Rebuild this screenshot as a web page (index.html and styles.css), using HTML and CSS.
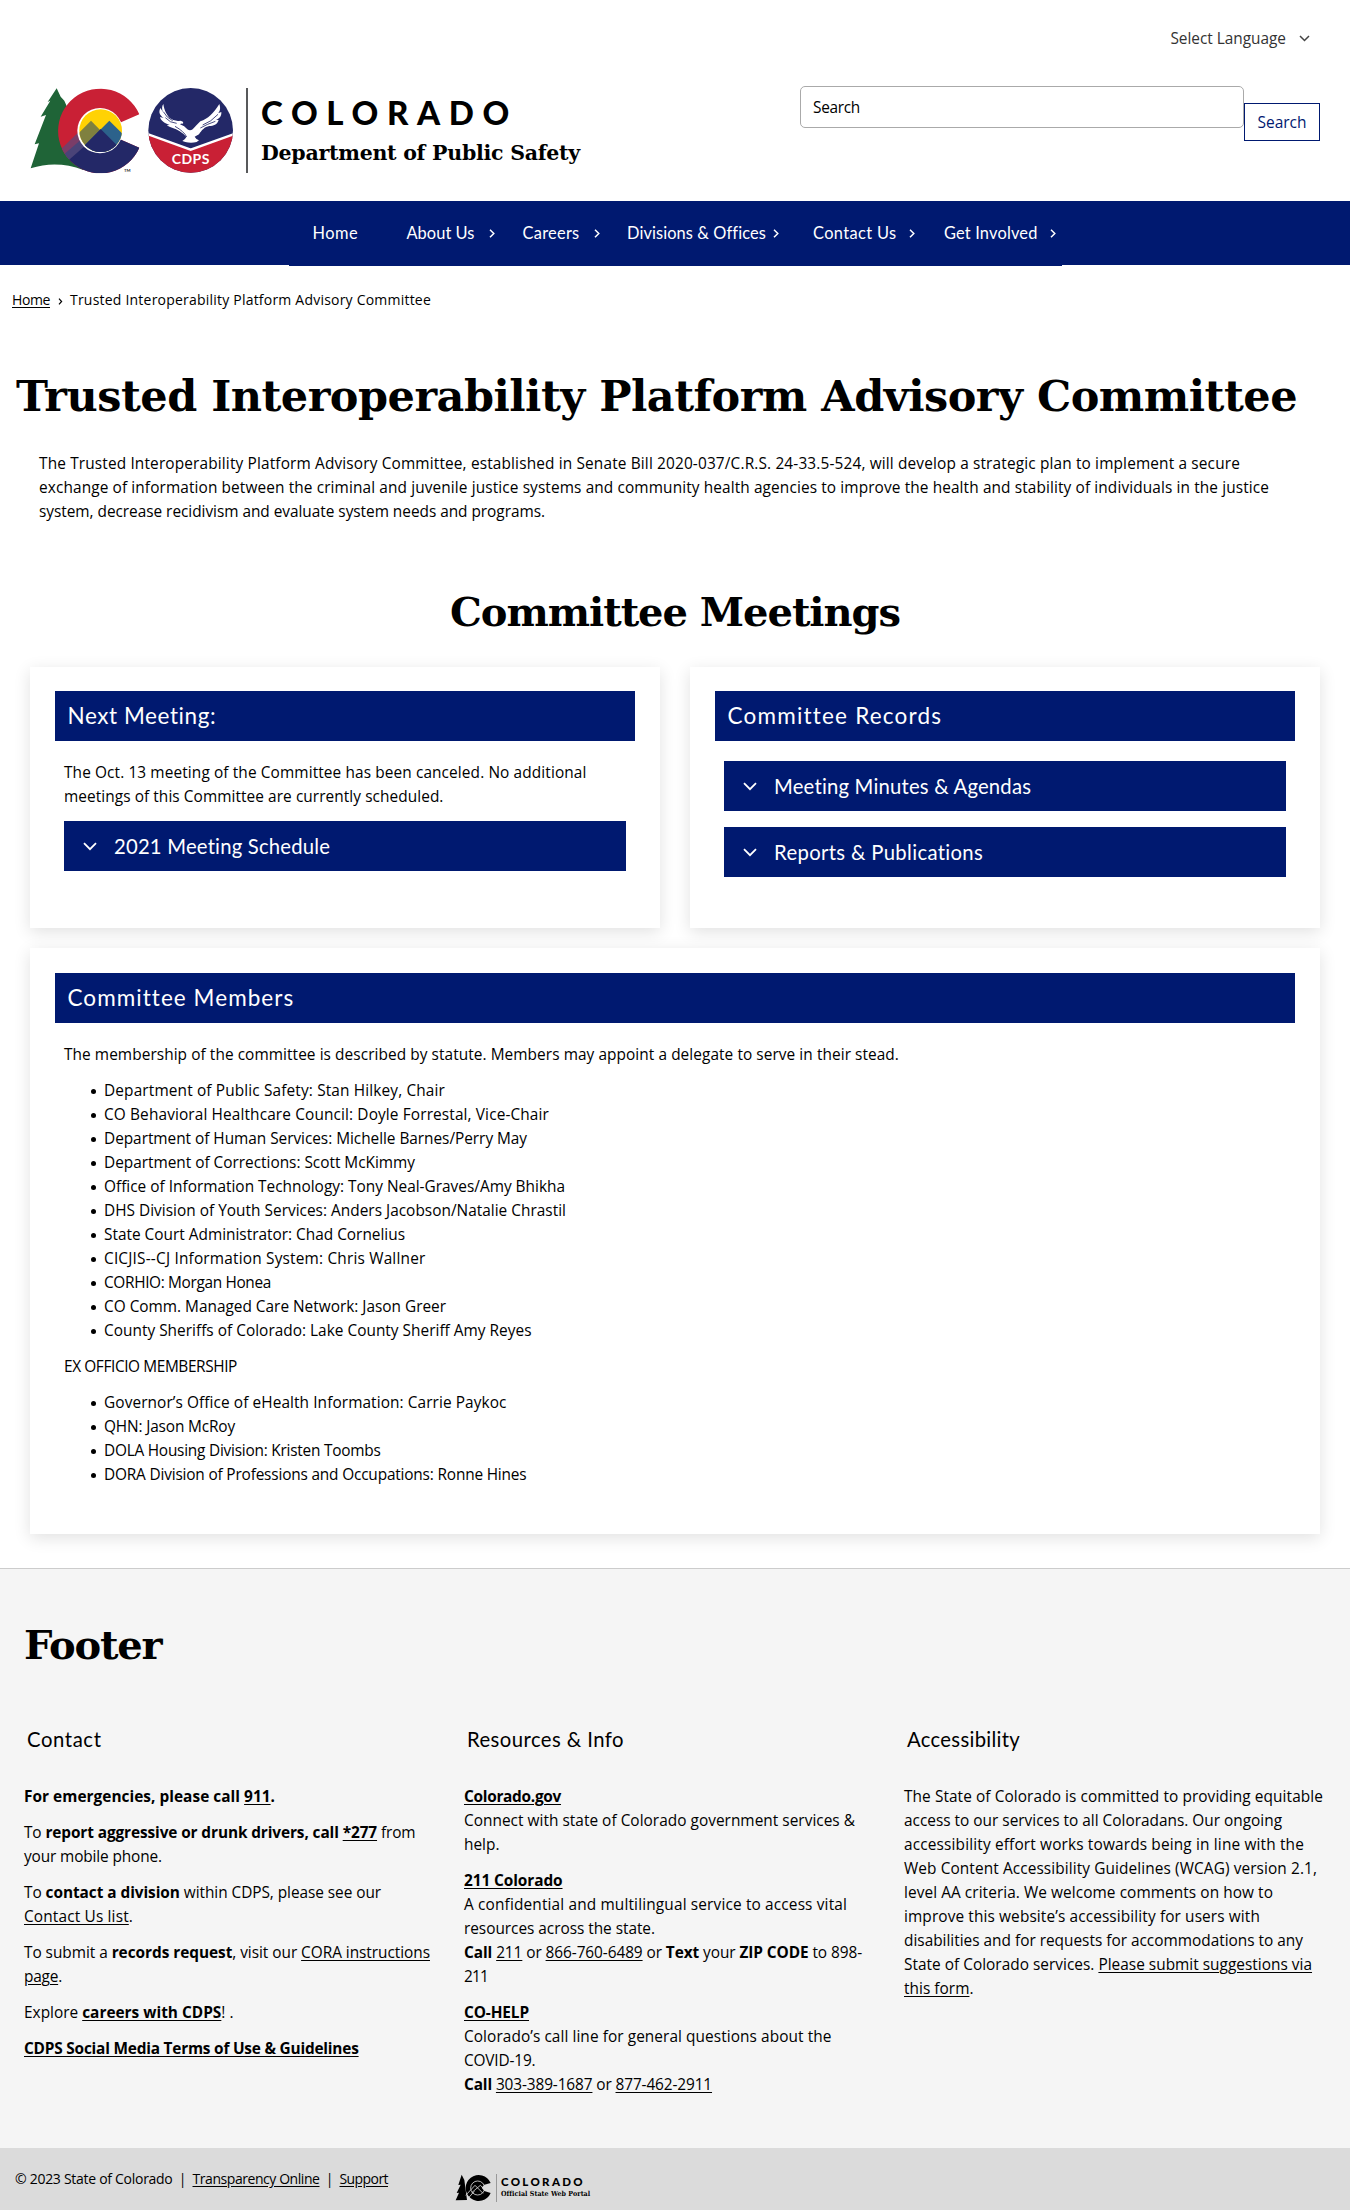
FILE: index.html
```html
<!DOCTYPE html>
<html lang="en">
<head>
<meta charset="utf-8">
<title>Trusted Interoperability Platform Advisory Committee</title>
<link rel="stylesheet" href="styles.css">
</head>
<body>
<header class="site-header">
  <div class="language"><span data-w="115.6">Select Language</span>
    <svg class="language-chevron" width="11" height="7" viewBox="0 0 11 7"><path d="M1 1l4.5 4.5L10 1"/></svg>
  </div>
  <div class="masthead">
    <a class="logo">
      <svg width="220" height="100" viewBox="0 0 660 300" role="img" aria-label="Colorado CDPS">
        <defs>
          <clipPath id="sun"><circle cx="242" cy="152" r="64"/></clipPath>
          <clipPath id="badge"><circle cx="512" cy="151" r="127"/></clipPath>
          <clipPath id="ring"><path d="M358 103A127 127 0 1 0 358 203L303 179L282 152L303 127Z"/></clipPath>
        </defs>
        <path fill="#1f6437" d="M110 25L122 50L133 62L140 78L151 108L190 270Q110 240 32 265L57 190L44 193L78 105L62 110L91 62L83 66Z"/>
        <g clip-path="url(#ring)">
          <rect x="110" y="20" width="260" height="260" fill="#c92035"/>
          <path fill="#232867" d="M120 250L190 190L300 170L370 170V290H120Z"/>
          <path fill="#7a3d68" d="M112 218L182 150L200 190L140 242Z"/>
          <path fill="#4a4478" d="M126 228L196 168L204 190L144 242Z"/>
        </g>
        <circle cx="240" cy="152" r="68" fill="#fff"/>
        <g clip-path="url(#sun)">
          <rect x="170" y="80" width="140" height="144" fill="#ffd204"/>
          <path fill="#7f803f" d="M150 185L213 122L290 200V230H150Z"/>
          <path fill="#2c628b" d="M180 210L268 122L320 174V230H180Z"/>
          <path fill="#232867" d="M168 222L242 147L320 225V240H168Z"/>
        </g>
        <text x="312" y="276" class="mark-tm">TM</text>
        <g clip-path="url(#badge)">
          <rect x="380" y="20" width="264" height="264" fill="#232867"/>
          <path fill="#c92035" stroke="#fff" stroke-width="7" d="M370 158L512 209L654 158V300H370Z"/>
        </g>
        <path fill="#fff" d="M430 72C433 92 440 104 449 114Q463 125 481 122Q492 124 489 131Q483 130 480 133Q494 137 502 148Q510 154 518 148Q528 137 541 124C565 116 579 101 598 72C603 86 599 95 594 100L604 96C605 110 597 116 588 120L596 120C592 134 580 138 568 138C554 140 545 151 537 163L524 170Q528 178 537 181L530 186Q513 191 496 186L487 183Q496 178 499 171Q490 160 478 153C466 145 450 143 440 136L449 135C434 130 423 123 420 111L431 114C419 105 415 98 421 84L429 96Q423 82 430 72Z"/>
        <path fill="none" stroke="#232867" stroke-width="2.5" d="M430 95Q440 114 458 122M436 113Q450 129 470 130M500 171Q492 154 465 139M548 135Q573 126 594 103M541 144Q560 133 586 124"/>
        <text x="455" y="252" class="badge-text" textLength="113">CDPS</text>
      </svg>
      <span class="logo-rule"></span>
      <span class="logo-text">
        <span class="logo-state"><span data-w="257">COLORADO</span></span>
        <span class="logo-dept"><span data-w="319">Department of Public Safety</span></span>
      </span>
    </a>
    <form class="search">
      <label class="search-field"><span data-w="47">Search</span></label>
      <button type="button" class="search-button"><span data-w="49">Search</span></button>
    </form>
  </div>
</header>

<nav class="site-nav">
  <ul class="menu">
    <li><span data-w="45.5">Home</span></li>
    <li><span data-w="68">About Us</span><svg class="caret" width="6" height="9" viewBox="0 0 6 9"><path d="M1 .7l3.8 3.8L1 8.3"/></svg></li>
    <li><span data-w="57">Careers</span><svg class="caret" width="6" height="9" viewBox="0 0 6 9"><path d="M1 .7l3.8 3.8L1 8.3"/></svg></li>
    <li><span data-w="138">Divisions &amp; Offices</span><svg class="caret" width="6" height="9" viewBox="0 0 6 9"><path d="M1 .7l3.8 3.8L1 8.3"/></svg></li>
    <li><span data-w="83.5">Contact Us</span><svg class="caret" width="6" height="9" viewBox="0 0 6 9"><path d="M1 .7l3.8 3.8L1 8.3"/></svg></li>
    <li><span data-w="93.5">Get Involved</span><svg class="caret" width="6" height="9" viewBox="0 0 6 9"><path d="M1 .7l3.8 3.8L1 8.3"/></svg></li>
  </ul>
</nav>

<div class="breadcrumb">
  <a data-w="38">Home</a>
  <svg width="5" height="7" viewBox="0 0 5 7"><path d="M1 .7l2.6 2.8L1 6.3"/></svg>
  <span data-w="361">Trusted Interoperability Platform Advisory Committee</span>
</div>

<main>
  <h1><span data-w="1281">Trusted Interoperability Platform Advisory Committee</span></h1>
  <p class="intro"><span data-w="1201">The Trusted Interoperability Platform Advisory Committee, established in Senate Bill 2020-037/C.R.S. 24-33.5-524, will develop a strategic plan to implement a secure</span><br><span data-w="1230">exchange of information between the criminal and juvenile justice systems and community health agencies to improve the health and stability of individuals in the justice</span><br><span data-w="506">system, decrease recidivism and evaluate system needs and programs.</span></p>
  <h2><span data-w="450">Committee Meetings</span></h2>

  <div class="cards">
    <section class="card">
      <h3><span data-w="149">Next Meeting:</span></h3>
      <div class="card-body">
        <p><span data-w="522.5">The Oct. 13 meeting of the Committee has been canceled. No additional</span><br><span data-w="379.5">meetings of this Committee are currently scheduled.</span></p>
        <div class="accordion"><svg width="14" height="9" viewBox="0 0 14 9"><path d="M1 1.2l6 6 6-6"/></svg><span data-w="216.5">2021 Meeting Schedule</span></div>
      </div>
    </section>
    <section class="card">
      <h3><span data-w="214">Committee Records</span></h3>
      <div class="card-body">
        <div class="accordion"><svg width="14" height="9" viewBox="0 0 14 9"><path d="M1 1.2l6 6 6-6"/></svg><span data-w="257.5">Meeting Minutes &amp; Agendas</span></div>
        <div class="accordion"><svg width="14" height="9" viewBox="0 0 14 9"><path d="M1 1.2l6 6 6-6"/></svg><span data-w="209.5">Reports &amp; Publications</span></div>
      </div>
    </section>
    <section class="card card-wide">
      <h3><span data-w="226">Committee Members</span></h3>
      <div class="card-body">
        <p><span data-w="835">The membership of the committee is described by statute. Members may appoint a delegate to serve in their stead.</span></p>
        <ul>
          <li><span data-w="341">Department of Public Safety: Stan Hilkey, Chair</span></li>
          <li><span data-w="445">CO Behavioral Healthcare Council: Doyle Forrestal, Vice-Chair</span></li>
          <li><span data-w="423">Department of Human Services: Michelle Barnes/Perry May</span></li>
          <li><span data-w="311">Department of Corrections: Scott McKimmy</span></li>
          <li><span data-w="461">Office of Information Technology: Tony Neal-Graves/Amy Bhikha</span></li>
          <li><span data-w="462">DHS Division of Youth Services: Anders Jacobson/Natalie Chrastil</span></li>
          <li><span data-w="301">State Court Administrator: Chad Cornelius</span></li>
          <li><span data-w="321.5">CICJIS--CJ Information System: Chris Wallner</span></li>
          <li><span data-w="167">CORHIO: Morgan Honea</span></li>
          <li><span data-w="342">CO Comm. Managed Care Network: Jason Greer</span></li>
          <li><span data-w="427.5">County Sheriffs of Colorado: Lake County Sheriff Amy Reyes</span></li>
        </ul>
        <p><span data-w="173">EX OFFICIO MEMBERSHIP</span></p>
        <ul>
          <li><span data-w="402.5">Governor’s Office of eHealth Information: Carrie Paykoc</span></li>
          <li><span data-w="131">QHN: Jason McRoy</span></li>
          <li><span data-w="276.5">DOLA Housing Division: Kristen Toombs</span></li>
          <li><span data-w="422.5">DORA Division of Professions and Occupations: Ronne Hines</span></li>
        </ul>
      </div>
    </section>
  </div>
</main>

<footer>
  <div class="footer-main">
    <h2><span data-w="137.5">Footer</span></h2>
    <div class="footer-columns">
      <section>
        <h4><span data-w="74.5">Contact</span></h4>
        <p><b data-w="251">For emergencies, please call <a>911</a>.</b></p>
        <p><span data-w="391.5">To <b>report aggressive or drunk drivers, call <a>*277</a></b> from</span><br><span data-w="138">your mobile phone.</span></p>
        <p><span data-w="357">To <b>contact a division</b> within CDPS, please see our</span><br><span data-w="109"><a>Contact Us list</a>.</span></p>
        <p><span data-w="406">To submit a <b>records request</b>, visit our <a>CORA instructions</a></span><br><span data-w="38"><a>page</a>.</span></p>
        <p><span data-w="209.5">Explore <b><a>careers with CDPS</a></b>! .</span></p>
        <p><b data-w="334.6"><a>CDPS Social Media Terms of Use &amp; Guidelines</a></b></p>
      </section>
      <section>
        <h4><span data-w="157">Resources &amp; Info</span></h4>
        <p><b data-w="97"><a>Colorado.gov</a></b><br><span data-w="391">Connect with state of Colorado government services &amp;</span><br><span data-w="35.5">help.</span></p>
        <p><b data-w="98.5"><a>211 Colorado</a></b><br><span data-w="383">A confidential and multilingual service to access vital</span><br><span data-w="191">resources across the state.</span><br><span data-w="398"><b>Call</b> <a>211</a> or <a>866-760-6489</a> or <b>Text</b> your <b>ZIP CODE</b> to 898-</span><br><span data-w="24">211</span></p>
        <p><b data-w="65"><a>CO-HELP</a></b><br><span data-w="367.5">Colorado’s call line for general questions about the</span><br><span data-w="71.5">COVID-19.</span><br><span data-w="248"><b>Call</b> <a>303-389-1687</a> or <a>877-462-2911</a></span></p>
      </section>
      <section>
        <h4><span data-w="113">Accessibility</span></h4>
        <p><span data-w="419">The State of Colorado is committed to providing equitable</span><br><span data-w="378">access to our services to all Coloradans. Our ongoing</span><br><span data-w="400">accessibility effort works towards being in line with the</span><br><span data-w="413">Web Content Accessibility Guidelines (WCAG) version 2.1,</span><br><span data-w="369">level AA criteria. We welcome comments on how to</span><br><span data-w="356">improve this website’s accessibility for users with</span><br><span data-w="399">disabilities and for requests for accommodations to any</span><br><span data-w="408">State of Colorado services. <a>Please submit suggestions via</a></span><br><span data-w="69.5"><a>this form</a>.</span></p>
      </section>
    </div>
  </div>
  <div class="footer-bar">
    <div class="legal"><span data-w="157.5">© 2023 State of Colorado</span><i>|</i><a data-w="127">Transparency Online</a><i>|</i><a data-w="48.5">Support</a></div>
    <div class="portal">
      <svg width="36" height="28" viewBox="0 0 108 84">
        <path d="M20 2L28 18L36 78L2 79L12 56L5 57L17 32L10 33Z"/>
        <path d="M107 27A39 39 0 1 0 107 57L88 51L80 41L88 32Z"/>
        <circle cx="68" cy="42" r="21" class="portal-line"/>
        <path class="portal-line" d="M32 64L60 34L84 58M50 56L76 34L89 46M40 72L58 52"/>
      </svg>
      <span class="portal-rule"></span>
      <span class="portal-text"><span class="portal-state"><span data-w="84">COLORADO</span></span><span class="portal-name"><span data-w="89">Official State Web Portal</span></span></span>
    </div>
  </div>
</footer>
<script src="tracking.js"></script>
</body>
</html>
```
FILE: styles.css
```css
*{box-sizing:border-box}
body,h1,h2,h3,h4,p,ul{margin:0;padding:0}
body{font:15.4px/24px "Open Sans","Noto Sans",sans-serif;color:#000;background:#fff;overflow-x:hidden}
[data-w]{white-space:nowrap}
svg{display:block;flex:none}
a{text-decoration:underline;text-underline-offset:2px}
ul{list-style:none}

.site-header{height:201px}
.language{display:flex;align-items:center;justify-content:flex-end;gap:13px;padding:27px 40px 0 0;height:50px;color:#333}
.language-chevron,.caret,.breadcrumb svg,.accordion svg{fill:none;stroke:#444;stroke-width:1.5}
.masthead{display:flex;justify-content:space-between;align-items:flex-start;padding:30px 30px 0 20px}
.logo{display:flex;text-decoration:none}
.logo-rule{width:2px;height:85px;margin:8px 13px 0 6px;background:#58595b}
.logo-text{padding-top:14px}
.logo-state{display:block;font:900 33px/36px Lato,sans-serif;margin-bottom:8px}
.logo-dept{display:block;font:700 20.5px/30px "DejaVu Serif",serif}
.mark-tm{font:500 13px Lato,sans-serif}
.badge-text{font:700 42px Lato,sans-serif;fill:#fff}
.search{display:flex;align-items:flex-start;width:520px;margin-top:6px}
.search-field{flex:1;height:42px;padding:9px 12px;border:1px solid #aaa;border-radius:5px}
.search-button{width:76px;height:38px;margin-top:17px;padding:0;border:1px solid #001970;background:#fff;color:#001970;font:500 15.5px/24px "Open Sans",sans-serif}

.site-nav{height:64px;background:#001970}
.menu{display:grid;grid-template-columns:94px 116px 104.5px 186px 131px 118px;width:773px;height:65px;margin:0 auto;padding-left:24px;background:#001970;color:#fff;font:400 16.4px/64px Lato,sans-serif}
.menu li{display:flex;align-items:center;height:64px}
.caret{margin-left:14px;stroke:#fff}
.menu li:nth-child(4) .caret{margin-left:7px}
.menu li:nth-child(n+5) .caret{margin-left:12px}

.breadcrumb{display:flex;align-items:center;padding:23px 12px 0;font-size:14px}
.breadcrumb svg{margin:2px 7px 0 8px;stroke:#000;stroke-width:1.2}

h1,h2{font:700 43px/60px "DejaVu Serif",serif}
h1{margin:54px 0 26px 16px}
h2{font-size:40px}
main h2{margin:58px 0 25px;text-align:center}
.intro{padding-left:39px}
.cards{display:grid;grid-template-columns:630px 630px;gap:20px 30px;padding:0 30px 34px}
.card{height:261px;padding:24px 25px 0;background:#fff;box-shadow:0 4px 16px rgba(0,0,0,.12)}
.card-wide{grid-column:1/3;height:586px;padding-top:25px}
.card h3{height:50px;padding-left:12.5px;background:#001970;color:#fff;font:400 22.5px/50px Lato,sans-serif;margin-bottom:20px}
.card-body{padding:0 9px}
.card-body p,.card-body ul{margin-bottom:12px}
.card-body ul{padding-left:26.5px}
.card-body li{display:flex}
.card-body li::before{content:"";width:5px;height:5px;margin:10px 8.5px 0 0;border-radius:50%;background:#000}
.accordion{display:flex;align-items:center;gap:17px;height:50px;padding-left:19px;margin-bottom:16px;background:#001970;color:#fff;font:400 20.3px/50px Lato,sans-serif}
.accordion svg{stroke:#fff;stroke-width:1.8}

.footer-main{height:580px;padding:46px 0 0 24px;border-top:1px solid #ccc;background:#f5f5f5}
.footer-main h2{font-size:40px;margin-bottom:49px}
.footer-columns{display:grid;grid-template-columns:repeat(3,440px)}
.footer-columns h4{margin:0 0 31px 3px;font:400 20.3px/30px Lato,sans-serif}
.footer-columns p{margin-bottom:12px}
.footer-bar{display:flex;height:62px;background:#dbdbdb;padding-left:15px}
.legal{display:flex;width:440px;padding-top:19px;font-size:14px}
.legal i{width:20px;text-align:center;font-style:normal}
.portal{display:flex;padding-top:26px}
.portal svg{fill:#000}
.portal .portal-line{fill:none;stroke:#dbdbdb;stroke-width:2.5}
.portal-rule{width:1px;height:28px;margin:0 4px 0 5px;background:#999}
.portal-text{padding-top:1px}
.portal-state{display:block;font:900 11.5px/14px Lato,sans-serif}
.portal-name{display:block;font:700 7px/10px "DejaVu Serif Condensed",serif}
```
FILE: tracking.js
```js
// Sets the tracking of each line so that it fills its measure, whichever face is installed.
document.fonts.ready.then(() => {
  document.querySelectorAll('[data-w]').forEach((line) => {
    const chars = line.textContent.trim().length;
    const slack = parseFloat(line.dataset.w) - line.getBoundingClientRect().width;
    line.style.letterSpacing = (slack / chars).toFixed(3) + 'px';
  });
});
```
